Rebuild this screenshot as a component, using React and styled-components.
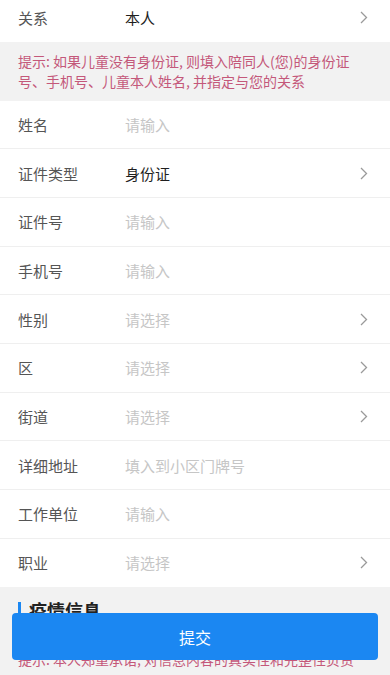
import React from "react";
import styled, { createGlobalStyle } from "styled-components";

const Global = createGlobalStyle`
  html, body { margin: 0; padding: 0; background: #ffffff; }
  body { font-family: "Noto Sans CJK SC", "Noto Sans", sans-serif; -webkit-font-smoothing: antialiased; }
  * { box-sizing: border-box; }
`;

const Page = styled.div`
  margin-top: -7px;
  width: 390px;
  background: #fff;
`;

const Row = styled.div`
  display: flex;
  align-items: center;
  height: 48.67px;
  padding: 0 18px;
  background: #fff;
  border-bottom: ${(p) => (p.$noBorder ? "none" : "1px solid #efefef")};
`;

const Label = styled.div`
  width: 107px;
  flex: none;
  font-size: 15px;
  color: #555;
`;

const Value = styled.div`
  flex: 1;
  font-size: 15px;
  color: ${(p) => (p.$placeholder ? "#c6c6c6" : "#1f1f1f")};
  font-weight: 400;
`;

const Arrow = styled.svg`
  width: 8px;
  height: 13px;
  flex: none;
  margin-right: 4px;
`;

const Tip = styled.div`
  background: #f2f2f2;
  padding: 9px 18px 10px;
  font-size: 14px;
  line-height: 20px;
  color: #c4587a;
`;

const Section = styled.div`
  background: #f2f2f2;
  padding: 12px 18px 4px;
  height: 90px;
`;

const Heading = styled.div`
  display: flex;
  align-items: center;
  gap: 8px;
  font-size: 18px;
  font-weight: 700;
  color: #222;
  line-height: 22px;
`;

const Bar = styled.span`
  width: 3px;
  height: 16px;
  background: #1b87f2;
  display: inline-block;
`;

const SectionTip = styled.div`
  margin-top: 28px;
  font-size: 14px;
  line-height: 20px;
  color: #c4587a;
`;

const SubmitButton = styled.button`
  position: fixed;
  left: 12px;
  right: 12px;
  bottom: 15px;
  height: 47px;
  border: none;
  border-radius: 4px;
  background: #1b87f2;
  color: #fff;
  font-family: "Noto Sans CJK SC", sans-serif;
  font-size: 16px;
  cursor: pointer;
`;

const Chevron = () => (
  <Arrow viewBox="0 0 8 13">
    <path d="M1 1 L6.5 6.5 L1 12" fill="none" stroke="#9a9a9a" strokeWidth="1.3" />
  </Arrow>
);

const rows = [
  { label: "姓名", value: "请输入", ph: true },
  { label: "证件类型", value: "身份证", arrow: true },
  { label: "证件号", value: "请输入", ph: true },
  { label: "手机号", value: "请输入", ph: true },
  { label: "性别", value: "请选择", ph: true, arrow: true },
  { label: "区", value: "请选择", ph: true, arrow: true },
  { label: "街道", value: "请选择", ph: true, arrow: true },
  { label: "详细地址", value: "填入到小区门牌号", ph: true },
  { label: "工作单位", value: "请输入", ph: true },
  { label: "职业", value: "请选择", ph: true, arrow: true },
];

export default function App() {
  return (
    <>
      <Global />
      <Page>
        <Row $noBorder>
          <Label>关系</Label>
          <Value>本人</Value>
          <Chevron />
        </Row>
        <Tip>
          提示: 如果儿童没有身份证, 则填入陪同人(您)的身份证
          <br />
          号、手机号、儿童本人姓名, 并指定与您的关系
        </Tip>
        {rows.map((r, i) => (
          <Row key={r.label} $noBorder={i === rows.length - 1}>
            <Label>{r.label}</Label>
            <Value $placeholder={r.ph}>{r.value}</Value>
            {r.arrow && <Chevron />}
          </Row>
        ))}
        <Section>
          <Heading>
            <Bar />
            疫情信息
          </Heading>
          <SectionTip>提示: 本人郑重承诺, 对信息内容的真实性和完整性负责</SectionTip>
        </Section>
      </Page>
      <SubmitButton>提交</SubmitButton>
    </>
  );
}
